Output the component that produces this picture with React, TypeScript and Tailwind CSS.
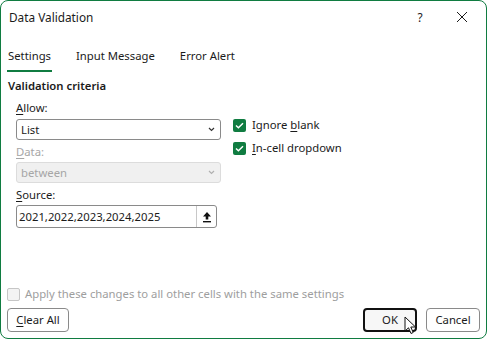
const Chevron = ({ color }: { color: string }) => (
  <svg width="7" height="5" viewBox="0 0 7 5" className="shrink-0">
    <path d="M1 1 L3.5 3.5 L6 1" fill="none" stroke={color} strokeWidth="1.2" />
  </svg>
);

const Check = ({ label, u, rest }: { label: string; u: string; rest: string }) => (
  <div className="flex items-center h-[16px]">
    <div className="w-[13px] h-[13px] rounded-[2px] bg-[#107c41] flex items-center justify-center">
      <svg width="9" height="7" viewBox="0 0 9 7">
        <path d="M1 3.5 L3.4 5.8 L8 1.2" fill="none" stroke="white" strokeWidth="1.5" />
      </svg>
    </div>
    <span className="ml-[6px]">
      {label}
      <span className="underline underline-offset-2">{u}</span>
      {rest}
    </span>
  </div>
);

export default function App() {
  return (
    <div
      className="w-[487px] h-[339px] bg-white border border-[#107c41] rounded-[8px] flex flex-col text-[11.3px] leading-[16px] text-[#1b1b1b] relative overflow-hidden"
      style={{ fontFamily: '"Segoe UI", "Noto Sans", sans-serif' }}
    >
      <div className="h-[31px] flex items-center pl-[8px] text-[11.8px]">
        <span className="flex-1">Data Validation</span>
        <span className="w-[20px] text-center">?</span>
        <svg width="12" height="12" viewBox="0 0 12 12" className="ml-[26px] mr-[18px]">
          <path d="M1 1 L11 11 M11 1 L1 11" stroke="#1b1b1b" strokeWidth="1" />
        </svg>
      </div>

      <div className="flex pl-[6px] pt-[16px] text-[11.3px]">
        <div className="flex flex-col">
          <span className="px-[1px]">Settings</span>
          <div className="mt-[6px] h-[2px] bg-[#107c41]" />
        </div>
        <span className="ml-[24px]">Input Message</span>
        <span className="ml-[25px]">Error Alert</span>
      </div>

      <div className="pl-[7px] pt-[6px] font-semibold">Validation criteria</div>

      <div className="flex">
        <div className="flex flex-col pl-[15px] w-[235px]">
          <div className="mt-[6px]">
            <span className="underline underline-offset-2">A</span>llow:
          </div>
          <div className="mt-[3px] w-[205px] h-[21px] border border-[#8a8a8a] rounded-[3px] flex items-center pl-[4px] pr-[5px]">
            <span className="flex-1">List</span>
            <Chevron color="#333" />
          </div>
          <div className="mt-[4px] text-[#a6a6a6]">
            <span className="underline underline-offset-2">D</span>ata:
          </div>
          <div className="mt-[2px] w-[205px] h-[21px] border border-[#dcdcdc] bg-[#f0f0f0] rounded-[3px] flex items-center pl-[4px] pr-[5px] text-[#a6a6a6]">
            <span className="flex-1">between</span>
            <Chevron color="#b0b0b0" />
          </div>
          <div className="mt-[4px]">
            <span className="underline underline-offset-2">S</span>ource:
          </div>
          <div className="mt-[2px] w-[201px] h-[23px] border border-[#8a8a8a] rounded-[3px] flex items-center pl-[2px]">
            <span className="flex-1">2021,2022,2023,2024,2025</span>
            <div className="w-[20px] h-[21px] border-l border-[#c8c8c8] flex items-center justify-center">
              <svg width="10" height="12" viewBox="0 0 10 12">
                <path d="M5 1 L9 5.5 L6.3 5.5 L6.3 8.5 L3.7 8.5 L3.7 5.5 L1 5.5 Z" fill="#111" />
                <rect x="1" y="10" width="8" height="1.4" fill="#111" />
              </svg>
            </div>
          </div>
        </div>
        <div className="flex flex-col pt-[23px] gap-[7px] ml-[-3px]">
          <Check label="Ignore " u="b" rest="lank" />
          <Check label="" u="I" rest="n-cell dropdown" />
        </div>
      </div>

      <div className="flex-1" />

      <div className="flex items-center pl-[6px] h-[16px] text-[#9e9e9e]">
        <div className="w-[13px] h-[13px] rounded-[2px] border border-[#c6c6c6] bg-[#f3f3f3]" />
        <span className="ml-[5px]">Apply these changes to all other cells with the same settings</span>
      </div>

      <div className="flex items-center mt-[6px] mb-[6px] px-[6px]">
        <div className="w-[62px] h-[24px] border border-[#8a8a8a] rounded-[4px] flex items-center justify-center">
          <span>
            <span className="underline underline-offset-2">C</span>lear All
          </span>
        </div>
        <div className="flex-1" />
        <div className="w-[54px] h-[24px] border-2 border-[#111] bg-[#f7f7f7] rounded-[4px] flex items-center justify-center">
          OK
        </div>
        <div className="ml-[9px] w-[54px] h-[24px] border border-[#8a8a8a] rounded-[4px] flex items-center justify-center">
          Cancel
        </div>
      </div>

      <svg width="14" height="20" viewBox="0 0 14 20" className="absolute left-[403px] top-[315px]">
        <path d="M1 1 L1 15 L4.5 11.8 L7 17.5 L9.2 16.5 L6.8 11 L11.5 11 Z" fill="white" stroke="#111" strokeWidth="1" strokeLinejoin="round" />
      </svg>
    </div>
  );
}
